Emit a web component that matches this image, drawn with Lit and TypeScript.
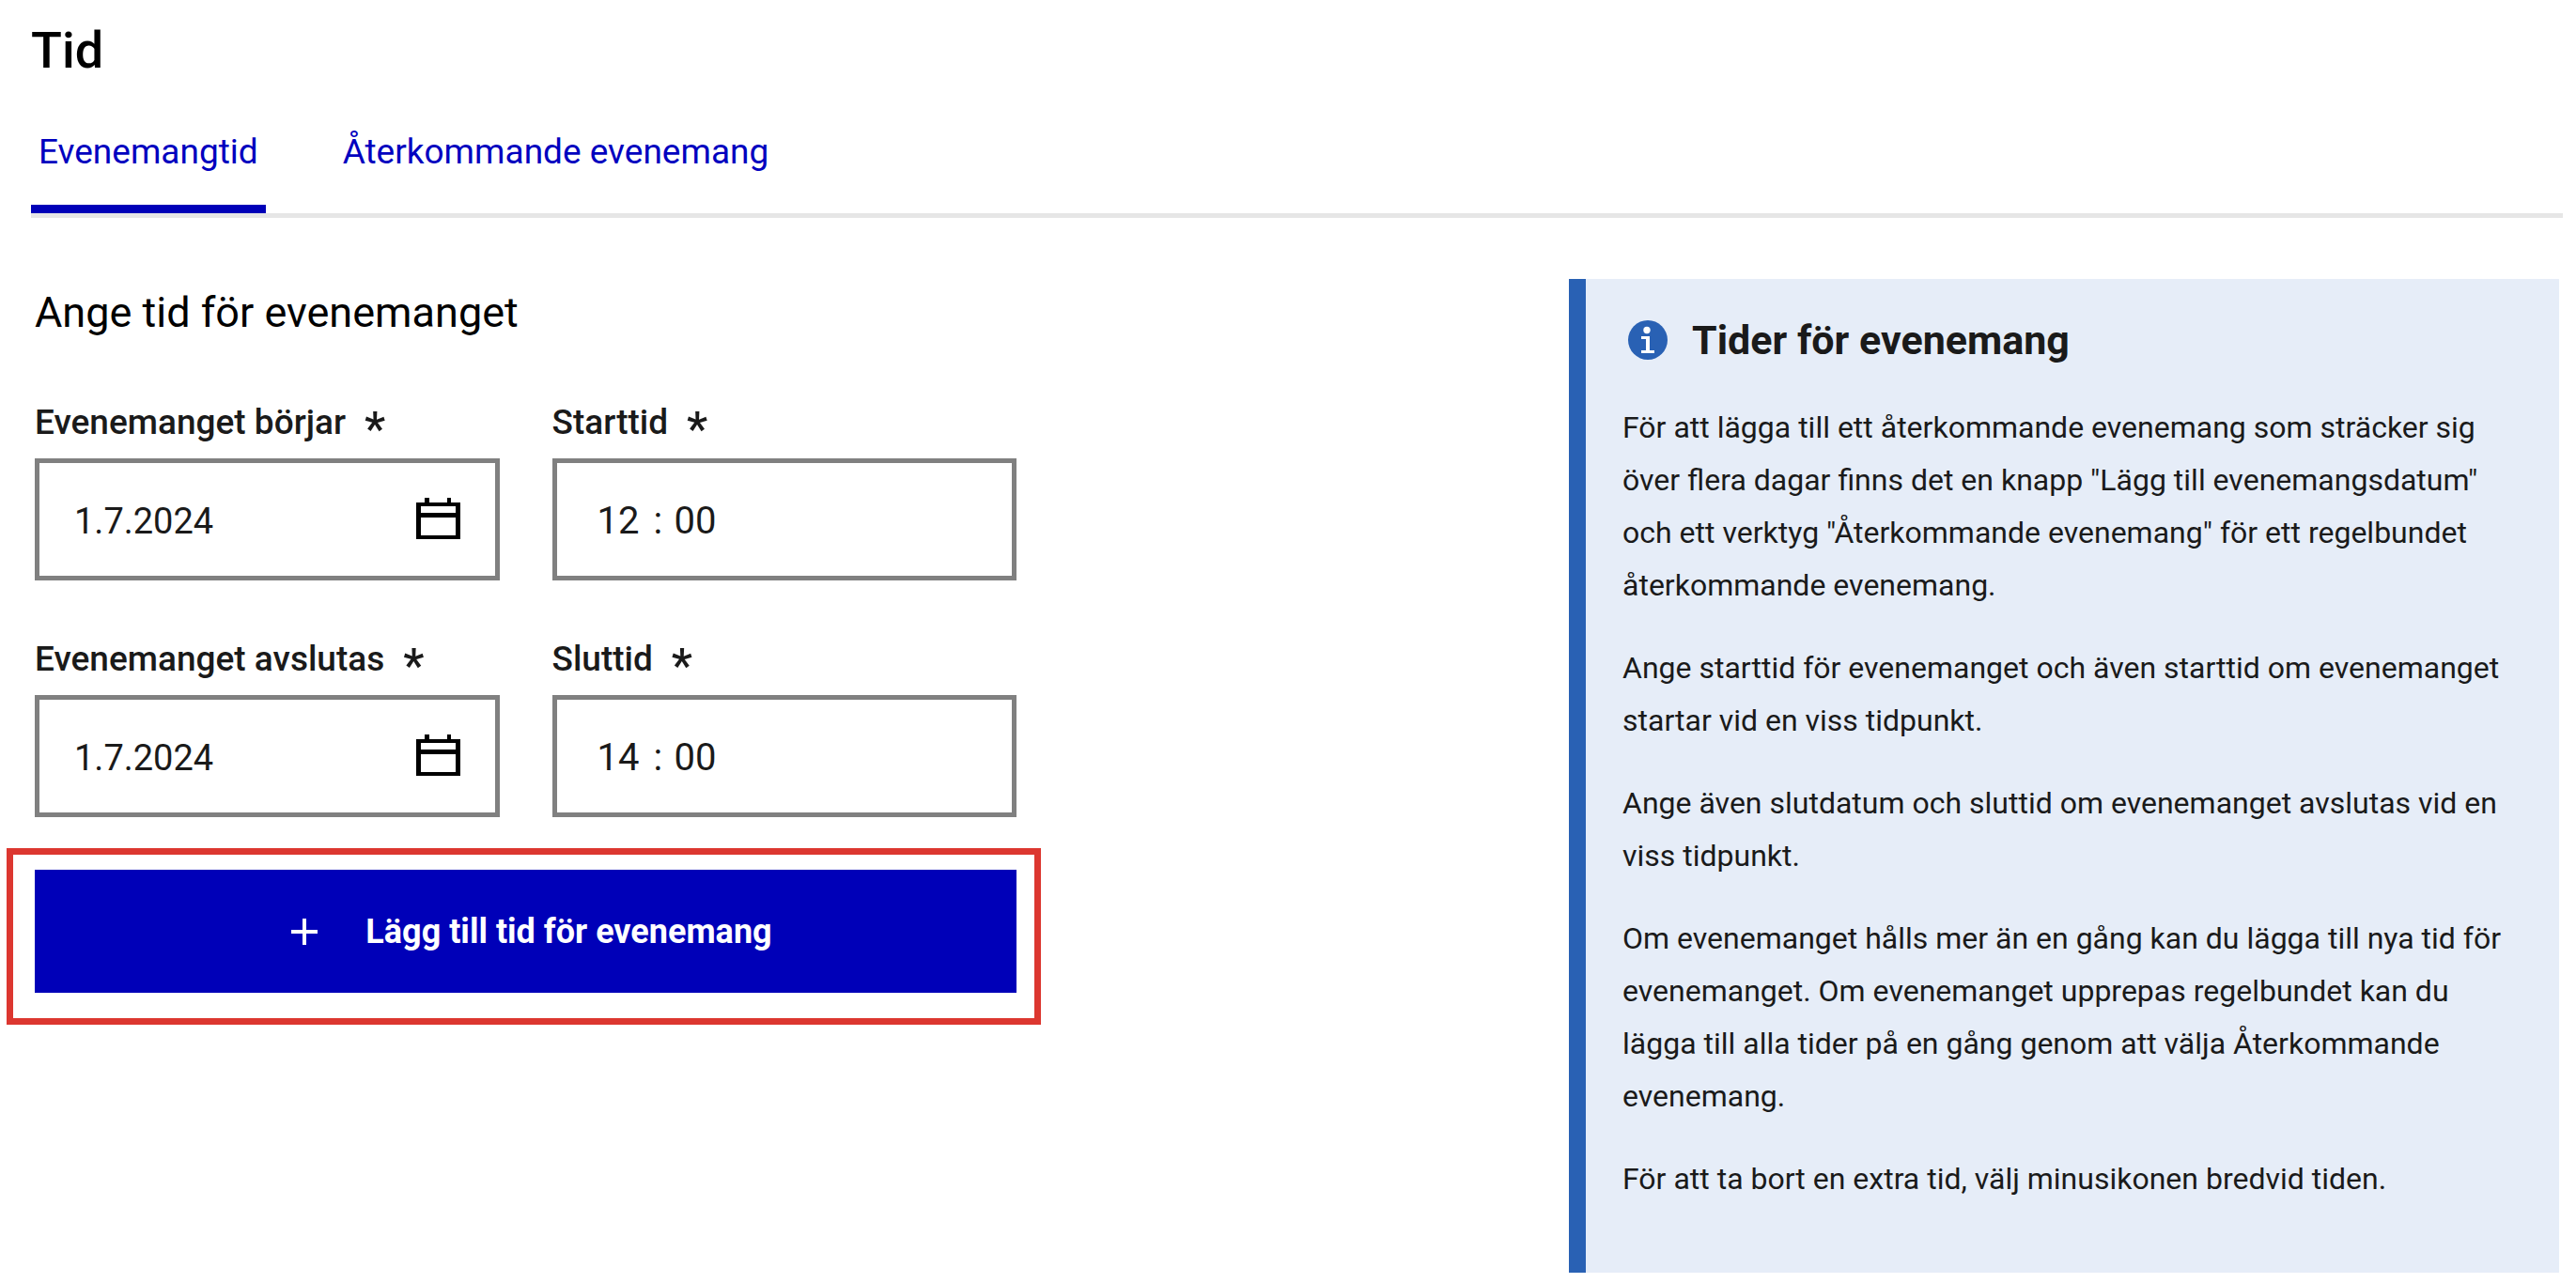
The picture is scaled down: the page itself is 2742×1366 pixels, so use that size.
import { LitElement, html, css, svg } from "lit";
import { customElement, property, state } from "lit/decorators.js";
import { classMap } from "lit/directives/class-map.js";

const calendarIcon = svg`
  <path fill="currentColor" fill-rule="evenodd" d="M9 0H14V5H33V0H37V5H47V44H0V5H9ZM5 9V16H42V9ZM5 21V40H42V21Z" />
`;

const fieldStyles = css`
  :host { display: block; min-width: 0; }
  .label { display: flex; font-size: 37px; font-weight: 500; line-height: 52px; gap: 20px; height: 64px; }
  .star { font-size: 50px; line-height: 67px; height: 48px; }
  .box { display: flex; align-items: center; box-sizing: border-box; height: 130px; border: 5px solid #808080; padding: 0 37px; }
  .input { border: 0; padding: 4px 0 0; outline: 0; background: none; color: inherit; font: inherit; }
`;

@customElement("date-field")
export class DateField extends LitElement {
  @property() label = "";
  @property() value = "";

  static styles = [
    fieldStyles,
    css`
      .box { font-size: 38px; line-height: 48px; }
      .input { flex: 1; min-width: 0; }
      .open { display: flex; border: 0; padding: 0; background: none; color: #000; }
      .icon { width: 47px; height: 46px; }
    `,
  ];

  render() {
    return html`
      <label class="label" for="date">${this.label}<span class="star" aria-hidden="true">*</span></label>
      <div class="box">
        <input class="input" id="date" type="text" required .value=${this.value} />
        <button class="open" type="button" aria-label="Välj datum">
          <svg class="icon" viewBox="0 0 47 46" shape-rendering="crispEdges" aria-hidden="true">${calendarIcon}</svg>
        </button>
      </div>
    `;
  }
}

@customElement("time-field")
export class TimeField extends LitElement {
  @property() label = "";
  @property() hours = "";
  @property() minutes = "";

  static styles = [
    fieldStyles,
    css`
      .box { padding-left: 43px; font-size: 40px; line-height: 48px; }
      .input { width: 60px; }
      .colon { width: 22px; padding-top: 4px; }
    `,
  ];

  render() {
    return html`
      <label class="label" for="hours">${this.label}<span class="star" aria-hidden="true">*</span></label>
      <div class="box">
        <input class="input" id="hours" type="text" inputmode="numeric" required .value=${this.hours} />
        <span class="colon">:</span>
        <input class="input" type="text" inputmode="numeric" aria-label="Minuter" .value=${this.minutes} />
      </div>
    `;
  }
}

@customElement("info-notice")
export class InfoNotice extends LitElement {
  @property() heading = "";
  @property({ attribute: false }) paragraphs: string[] = [];

  static styles = css`
    :host { display: block; box-sizing: border-box; border-left: 18px solid #2961b4; background: #e6edf8; padding: 37px 48px 72px 39px; }
    .head { display: flex; align-items: center; gap: 20px; margin-bottom: 37px; }
    .icon { width: 54px; height: 54px; flex: none; }
    .heading { margin: 0; font-size: 43px; font-weight: 700; line-height: 56px; }
    .text { margin: 0 0 32px; font-size: 32px; line-height: 56px; }
    .text:last-child { margin-bottom: 0; }
  `;

  render() {
    return html`
      <div class="head">
        <svg class="icon" viewBox="0 0 54 54" aria-hidden="true">
          <circle cx="27" cy="27" r="21" fill="#2961b4" />
          <circle cx="26" cy="16.5" r="3.7" fill="#fff" />
          <path d="M20 23H29V38H34V41H20V38H25V26H20Z" fill="#fff" />
        </svg>
        <h3 class="heading">${this.heading}</h3>
      </div>
      ${this.paragraphs.map((text) => html`<p class="text">${text}</p>`)}
    `;
  }
}

@customElement("app-root")
export class AppRoot extends LitElement {
  @state() private activeTab = 0;

  private tabs = ["Evenemangtid", "Återkommande evenemang"];

  private help = [
    'För att lägga till ett återkommande evenemang som sträcker sig över flera dagar finns det en knapp "Lägg till evenemangsdatum" och ett verktyg "Återkommande evenemang" för ett regelbundet återkommande evenemang.',
    "Ange starttid för evenemanget och även starttid om evenemanget startar vid en viss tidpunkt.",
    "Ange även slutdatum och sluttid om evenemanget avslutas vid en viss tidpunkt.",
    "Om evenemanget hålls mer än en gång kan du lägga till nya tid för evenemanget. Om evenemanget upprepas regelbundet kan du lägga till alla tider på en gång genom att välja Återkommande evenemang.",
    "För att ta bort en extra tid, välj minusikonen bredvid tiden.",
  ];

  static styles = css`
    :host { display: block; background: #fff; color: #1a1a1a; font-family: Roboto, "Liberation Sans", sans-serif; }
    .page { padding: 18px 14px 12px 33px; }
    .title { margin: 0; color: #000; font-size: 54px; font-weight: 500; line-height: 72px; }
    .tabs { display: flex; gap: 74px; margin-top: 32px; border-bottom: 5px solid #e6e6e6; }
    .tab { height: 105px; border: 0; border-bottom: 9px solid transparent; padding: 0 8px 16px; background: none; color: #0000bf; font: inherit; font-size: 37px; line-height: 48px; }
    .tab.active { border-bottom-color: #0000b8; }
    .content { display: grid; grid-template-columns: minmax(0, 1045fr) minmax(0, 588fr) minmax(0, 1054fr); align-items: start; padding: 65px 4px 0; }
    .subtitle { margin: 8px 0 63px; color: #000; font-size: 45px; font-weight: 400; line-height: 56px; }
    .fields { display: grid; grid-template-columns: 1fr 1fr; gap: 58px 56px; }
    .add-area { position: relative; margin-top: 56px; }
    .add { display: flex; align-items: center; justify-content: center; gap: 46px; width: 100%; height: 131px; border: 0; padding: 0 0 0 8px; background: #0000b8; color: #fff; font: inherit; font-size: 36px; font-weight: 700; line-height: 48px; }
    .plus { width: 38px; height: 38px; }
    .highlight { position: absolute; inset: -23px -26px -34px -30px; border: 7px solid #dc3730; pointer-events: none; }
    .notice { grid-column: 3; }
  `;

  render() {
    return html`
      <main class="page">
        <h1 class="title">Tid</h1>
        <div class="tabs" role="tablist">
          ${this.tabs.map(
            (name, i) => html`
              <button
                class=${classMap({ tab: true, active: i === this.activeTab })}
                type="button"
                role="tab"
                aria-selected=${i === this.activeTab}
                @click=${() => (this.activeTab = i)}
              >${name}</button>
            `
          )}
        </div>
        <div class="content">
          <form>
            <h2 class="subtitle">Ange tid för evenemanget</h2>
            <div class="fields">
              <date-field label="Evenemanget börjar" value="1.7.2024"></date-field>
              <time-field label="Starttid" hours="12" minutes="00"></time-field>
              <date-field label="Evenemanget avslutas" value="1.7.2024"></date-field>
              <time-field label="Sluttid" hours="14" minutes="00"></time-field>
            </div>
            <div class="add-area">
              <button class="add" type="button">
                <svg class="plus" viewBox="0 0 38 38" aria-hidden="true">
                  <path d="M5 19H33M19 5V33" stroke="currentColor" stroke-width="4" />
                </svg>
                Lägg till tid för evenemang
              </button>
              <div class="highlight"></div>
            </div>
          </form>
          <info-notice class="notice" heading="Tider för evenemang" .paragraphs=${this.help}></info-notice>
        </div>
      </main>
    `;
  }
}
